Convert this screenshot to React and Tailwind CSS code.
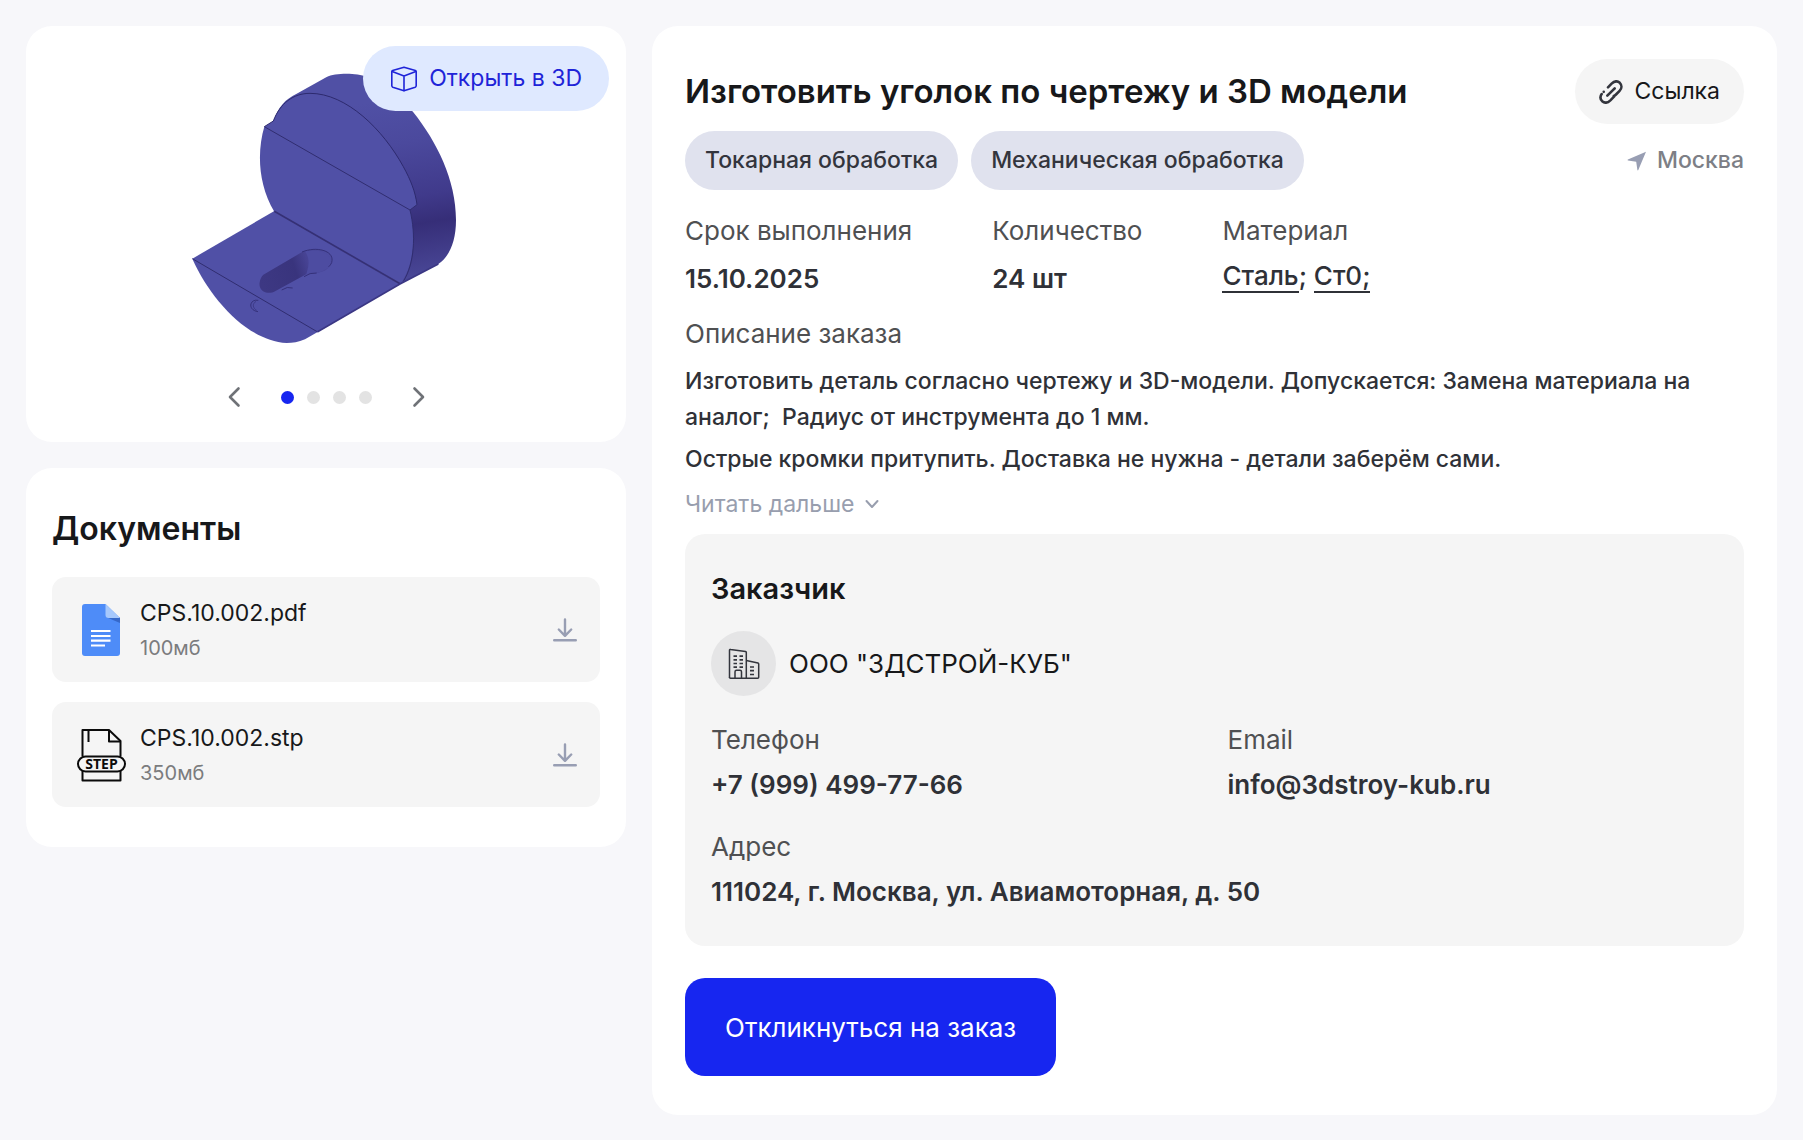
import React, { useState } from "react";

const SLIDES = [0, 1, 2, 3];

const DOCUMENTS = [
  { name: "CPS.10.002.pdf", size: "100мб", icon: PdfIcon },
  { name: "CPS.10.002.stp", size: "350мб", icon: StepIcon },
];

const TAGS = ["Токарная обработка", "Механическая обработка"];

function CubeIcon() {
  return (
    <svg className="h-7 w-7 shrink-0" viewBox="0 0 28 28" fill="none" stroke="currentColor" strokeWidth="1.6" strokeLinejoin="round" strokeLinecap="round" aria-hidden="true">
      <path d="M14 2.2 2.6 5.6a1.2 1.2 0 0 0-.8 1.1V20.8a1.6 1.6 0 0 0 1 1.4L14 25.8l11.2-3.6a1.6 1.6 0 0 0 1-1.4V6.7a1.2 1.2 0 0 0-.8-1.1Z" />
      <path d="M2.2 6.4 14 11l11.8-4.6M14 11v14.6" />
    </svg>
  );
}

function LinkIcon() {
  return (
    <svg className="h-6 w-6 shrink-0" viewBox="0 0 24 24" fill="none" stroke="#33353d" strokeWidth="2.6" strokeLinecap="round" aria-hidden="true">
      <path d="M9 7.300 12.600 3.600C15.200 1.100 18.400 .8 20.800 2.800C23 5.100 23 8.400 20.600 10.800L17 14.500C16.300 15.200 15.600 15.600 14.800 15.900" />
      <path d="M15 16.700 11.400 20.400C8.800 22.900 5.600 23.200 3.200 21.200C1 18.900 1 15.600 3.400 13.200L7 9.500C7.700 8.800 8.400 8.400 9.200 8.100" strokeDasharray="22 3 0" />
      <path d="M8.300 15.700 15.700 8.300" />
    </svg>
  );
}

function LocationIcon() {
  return (
    <svg className="h-5 w-5 shrink-0" viewBox="0 0 20 20" fill="#989eb3" aria-hidden="true">
      <path d="M19 .8 .9 8.600c-.5.3-.4.8.1.9l8.200 1.300 1.200 8.200c.1.5.7.6.9.1Z" />
    </svg>
  );
}

function DownloadIcon() {
  return (
    <svg className="h-6 w-6" viewBox="0 0 24 24" fill="none" stroke="#989eb3" strokeWidth="2.4" strokeLinecap="round" strokeLinejoin="round" aria-hidden="true">
      <path d="M12 1.500v16M5.800 11.500l6.200 6.300 6.200-6.300M1.200 22.200h21.600" />
    </svg>
  );
}

function ChevronIcon({ d }) {
  return (
    <svg className="h-6 w-6" viewBox="0 0 24 24" fill="none" stroke="#6f7277" strokeWidth="2.6" strokeLinecap="round" strokeLinejoin="round" aria-hidden="true">
      <path d={d} />
    </svg>
  );
}

function PdfIcon() {
  return (
    <svg className="h-[54px] w-[50px]" viewBox="0 0 50 54" aria-hidden="true">
      <path d="M9 1h20.500l14.500 14v35a3 3 0 0 1-3 3H9a3 3 0 0 1-3-3V4a3 3 0 0 1 3-3Z" fill="#4e8cf8" />
      <path d="M31 14.500 44 20v-5.500Z" fill="#3668c9" />
      <path d="M29.500 1v11a3 3 0 0 0 3 3H44Z" fill="#a6c8fc" />
      <path d="M15 28h19.500M15 33h19.500M15 37.700h19.500M15 42.500h14" stroke="#fff" strokeWidth="2.200" />
    </svg>
  );
}

function StepIcon() {
  return (
    <svg className="h-[54px] w-[50px]" viewBox="0 0 50 54" fill="none" stroke="#0b0b0b" strokeWidth="2" strokeLinejoin="round" aria-hidden="true">
      <path d="M6.500 28V2h26.500l11.500 11v15M6.500 43v9.500h38V43" />
      <path d="M33 2v11.500h11.500M12.500 3v11" />
      <rect x="2" y="28.500" width="47" height="15" rx="7.500" />
      <text x="25.500" y="41" textAnchor="middle" fontSize="14" fontWeight="700" fontFamily="Open Sans, sans-serif" fill="#0b0b0b" stroke="none">STEP</text>
    </svg>
  );
}

function BuildingIcon() {
  return (
    <svg className="h-8 w-8" viewBox="0 0 32 32" fill="none" stroke="#33353d" strokeWidth="1.500" strokeLinejoin="round" aria-hidden="true">
      <path d="M1.500 30V2.200a.8.8 0 0 1 1-.8l15 2.200a1 1 0 0 1 .8 1V30" />
      <path d="M18.300 12.600 30 15a1 1 0 0 1 .7 1v13.200a1 1 0 0 1-1 1H2.500a1 1 0 0 1-1-1" />
      <path d="M7 30v-6.200a1.500 1.500 0 0 1 1.500-1.500h3.500a1.500 1.500 0 0 1 1.500 1.500V30" />
      <path d="M5.500 8.200H9M11.500 8.200H15M5.500 11.800H9M11.500 11.800H15M5.500 15.500H9M11.500 15.500H15M5.500 19.200H9M11.500 19.200H15M22 19h4M22 22.700h4M22 26.500h4" strokeWidth="1.700" />
    </svg>
  );
}

function PartModel() {
  return (
    <svg className="h-[273px] w-[270px]" viewBox="63 66 810 819" role="img" aria-label="3D модель детали">
      <defs>
        <linearGradient id="side" gradientUnits="userSpaceOnUse" x1="700" y1="140" x2="790" y2="680">
          <stop offset="0" stopColor="#5050a5" />
          <stop offset="0.25" stopColor="#4b499d" />
          <stop offset="0.55" stopColor="#403a8b" />
          <stop offset="0.7" stopColor="#362e78" />
          <stop offset="1" stopColor="#4a4898" />
        </linearGradient>
        <linearGradient id="slot" x1="0" y1="0.6" x2="1" y2="0.4">
          <stop offset="0" stopColor="#3d3883" />
          <stop offset="0.5" stopColor="#39347d" />
          <stop offset="0.7" stopColor="#474394" />
          <stop offset="1" stopColor="#4d4ca0" />
        </linearGradient>
      </defs>
      {/* rim */}
      <path d="M312 212C325 170 345 148 380 131L470 81C495 68 560 68 590 80C650 100 695 145 730 187C800 275 858 390 858 510C858 575 838 620 805 642L690 702L440 400Z" fill="url(#side)" />
      {/* upright face */}
      <path d="M283 230 310 213C330 160 370 130 420 130C530 130 640 240 700 350C722 390 736 425 741 464L720 480C738 555 734 640 692 702L313 485C262 400 262 300 283 230Z" fill="#5050a6" />
      {/* base and front */}
      <path d="M67 626 313 483 690 702 443 846 405 868C385 877 368 879 350 879C230 872 120 745 67 626Z" fill="#5050a6" />
      <path d="M283 230 310 213C330 160 370 130 420 130C530 130 640 240 700 350C722 390 736 425 741 464" fill="none" stroke="#2d2a6e" strokeWidth="3" />
      <path d="M283 230 720 480 741 464M720 480C738 555 734 640 700 694M67 626 443 846" fill="none" stroke="#302d70" strokeWidth="3" />
      <path d="M313 484 690 701" stroke="#353075" strokeWidth="5" />
      <path d="M443 845 690 702 805 642" fill="none" stroke="#3b3784" strokeWidth="5" />
      {/* slot */}
      <path d="M280 674 400 604C440 590 490 600 486 632C484 658 460 670 410 672L318 722C292 738 264 722 269 697C270 688 274 680 280 674Z" fill="url(#slot)" />
      <path d="M404 603C425 630 412 660 408 676C430 668 462 672 480 646C490 615 460 596 404 603Z" fill="#4d4ca1" />
      <path d="M396 606C440 588 490 602 486 632C486 640 480 646 476 650M402 680Q420 667 440 669M335 720Q352 708 368 714" fill="none" stroke="#35317a" strokeWidth="3" />
      <path d="M265 751C238 746 232 780 264 785" fill="none" stroke="#35317a" strokeWidth="3" />
      <path d="M258 754C246 762 248 774 260 781" fill="none" stroke="#35317a" strokeWidth="2" />
    </svg>
  );
}

function Field({ label, children }) {
  return (
    <div className="flex flex-col gap-[13px]">
      <dt className="text-[26px] leading-8 text-[#4f5052]">{label}</dt>
      <dd className="text-[26px] leading-8 font-semibold text-[#2f3137]">{children}</dd>
    </div>
  );
}

function DocumentRow({ name, size, icon: Icon }) {
  return (
    <li className="flex items-center rounded-[14px] bg-[#f5f5f5] py-5 pr-[23px] pl-6">
      <Icon />
      <div className="ml-[14px] flex-1">
        <div className="text-[23px] leading-8 text-[#17181a]">{name}</div>
        <div className="mt-[5px] text-[20px] leading-7 text-[#7b7c7e]">{size}</div>
      </div>
      <button type="button" aria-label={"Скачать " + name}>
        <DownloadIcon />
      </button>
    </li>
  );
}

export default function App() {
  const [slide, setSlide] = useState(0);
  const move = (step) => setSlide((slide + step + SLIDES.length) % SLIDES.length);

  return (
    <main className="grid min-h-screen grid-cols-[8fr_15fr] items-start gap-[26px] bg-[#f7f7fa] p-[26px] font-['Inter',sans-serif]">
      <div className="flex flex-col gap-[26px]">
        <section className="relative flex flex-col items-center rounded-[26px] bg-white pt-[46px] pb-[25px]">
          <PartModel />
          <button type="button" className="absolute top-5 right-[17px] flex h-[65px] items-center gap-[11px] rounded-full bg-[#dfe9ff] px-[27px] text-[23px] text-[#1f24d8]">
            <CubeIcon />
            Открыть в 3D
          </button>
          <div className="mt-8 flex h-10 items-center">
            <button type="button" aria-label="Назад" onClick={() => move(-1)}>
              <ChevronIcon d="M16.500 3.500 8 12l8.500 8.500" />
            </button>
            <div className="mx-[35px] flex gap-[13px]">
              {SLIDES.map((i) => (
                <button key={i} type="button" aria-label={"Слайд " + (i + 1)} onClick={() => setSlide(i)}
                  className={"h-[13px] w-[13px] rounded-full " + (i === slide ? "bg-[#1726f0]" : "bg-[#e3e3e3]")} />
              ))}
            </div>
            <button type="button" aria-label="Вперёд" onClick={() => move(1)}>
              <ChevronIcon d="M7.500 3.500 16 12l-8.500 8.500" />
            </button>
          </div>
        </section>

        <section className="rounded-[26px] bg-white px-[26px] pt-[41px] pb-10">
          <h2 className="text-[32px] leading-10 font-semibold text-[#17181a]">Документы</h2>
          <ul className="mt-7 flex flex-col gap-5">
            {DOCUMENTS.map((doc) => (
              <DocumentRow key={doc.name} {...doc} />
            ))}
          </ul>
        </section>
      </div>

      <section className="rounded-[26px] bg-white px-[33px] pt-[33px] pb-[39px]">
        <div className="flex items-start justify-between">
          <h1 className="mt-3 text-[33px] leading-10 font-semibold text-[#17181a]">Изготовить уголок по чертежу и 3D модели</h1>
          <button type="button" className="flex h-[65px] items-center gap-3 rounded-full bg-[#f5f5f5] px-6 text-[23px] text-[#17181a]">
            <LinkIcon />
            Ссылка
          </button>
        </div>

        <div className="mt-[7px] flex items-center justify-between">
          <div className="flex gap-[13px]">
            {TAGS.map((tag) => (
              <span key={tag} className="flex h-[59px] items-center rounded-full bg-[#e0e2ee] px-5 text-[23px] font-medium text-[#33353d]">{tag}</span>
            ))}
          </div>
          <span className="flex items-center gap-[10px] text-[23px] font-medium text-[#7d7f86]">
            <LocationIcon />
            Москва
          </span>
        </div>

        <dl className="mt-[25px] flex gap-20">
          <Field label="Срок выполнения"><span className="mt-[3px] block">15.10.2025</span></Field>
          <Field label="Количество"><span className="mt-[3px] block">24 шт</span></Field>
          <Field label="Материал">
            <span className="mt-[3px] block leading-[26px] font-medium">
              <a href="#steel" className="border-b-2 border-current">Сталь</a>; <a href="#st0" className="border-b-2 border-current">Ст0;</a>
            </span>
          </Field>
        </dl>

        <h2 className="mt-[23px] text-[26px] leading-8 text-[#4f5052]">Описание заказа</h2>
        <div className="mt-[13px] text-[23px] leading-9 font-medium text-[#2f3137]">
          <p>Изготовить деталь согласно чертежу и 3D-модели. Допускается: Замена материала на аналог; &nbsp;Радиус от инструмента до 1 мм.</p>
          <p className="mt-[6px]">Острые кромки притупить. Доставка не нужна - детали заберём сами.</p>
        </div>
        <button type="button" className="mt-[11px] flex items-center gap-[10px] text-[23px] leading-8 text-[#989eae]">
          Читать дальше
          <svg className="h-4 w-4" viewBox="0 0 16 16" fill="none" stroke="currentColor" strokeWidth="2" strokeLinecap="round" strokeLinejoin="round" aria-hidden="true">
            <path d="M2.500 5 8 11l5.500-6" />
          </svg>
        </button>

        <section className="mt-[14px] rounded-[20px] bg-[#f5f5f5] px-[26px] pt-[37px] pb-[38px]">
          <h2 className="text-[29px] leading-9 font-semibold text-[#17181a]">Заказчик</h2>
          <div className="mt-6 flex items-center gap-[13px]">
            <div className="flex h-[65px] w-[65px] items-center justify-center rounded-full bg-[#e5e5e6]">
              <BuildingIcon />
            </div>
            <span className="text-[26px] leading-8 text-[#17181a]">ООО "3ДСТРОЙ-КУБ"</span>
          </div>
          <dl className="mt-7 grid grid-cols-2 gap-x-[26px] gap-y-[30px]">
            <Field label="Телефон">+7 (999) 499-77-66</Field>
            <Field label="Email">info@3dstroy-kub.ru</Field>
            <div className="col-span-2">
              <Field label="Адрес">111024, г. Москва, ул. Авиамоторная, д. 50</Field>
            </div>
          </dl>
        </section>

        <button type="button" className="mt-8 h-[98px] rounded-[20px] bg-[#1726f0] px-10 text-[26px] text-white">
          Откликнуться на заказ
        </button>
      </section>
    </main>
  );
}
